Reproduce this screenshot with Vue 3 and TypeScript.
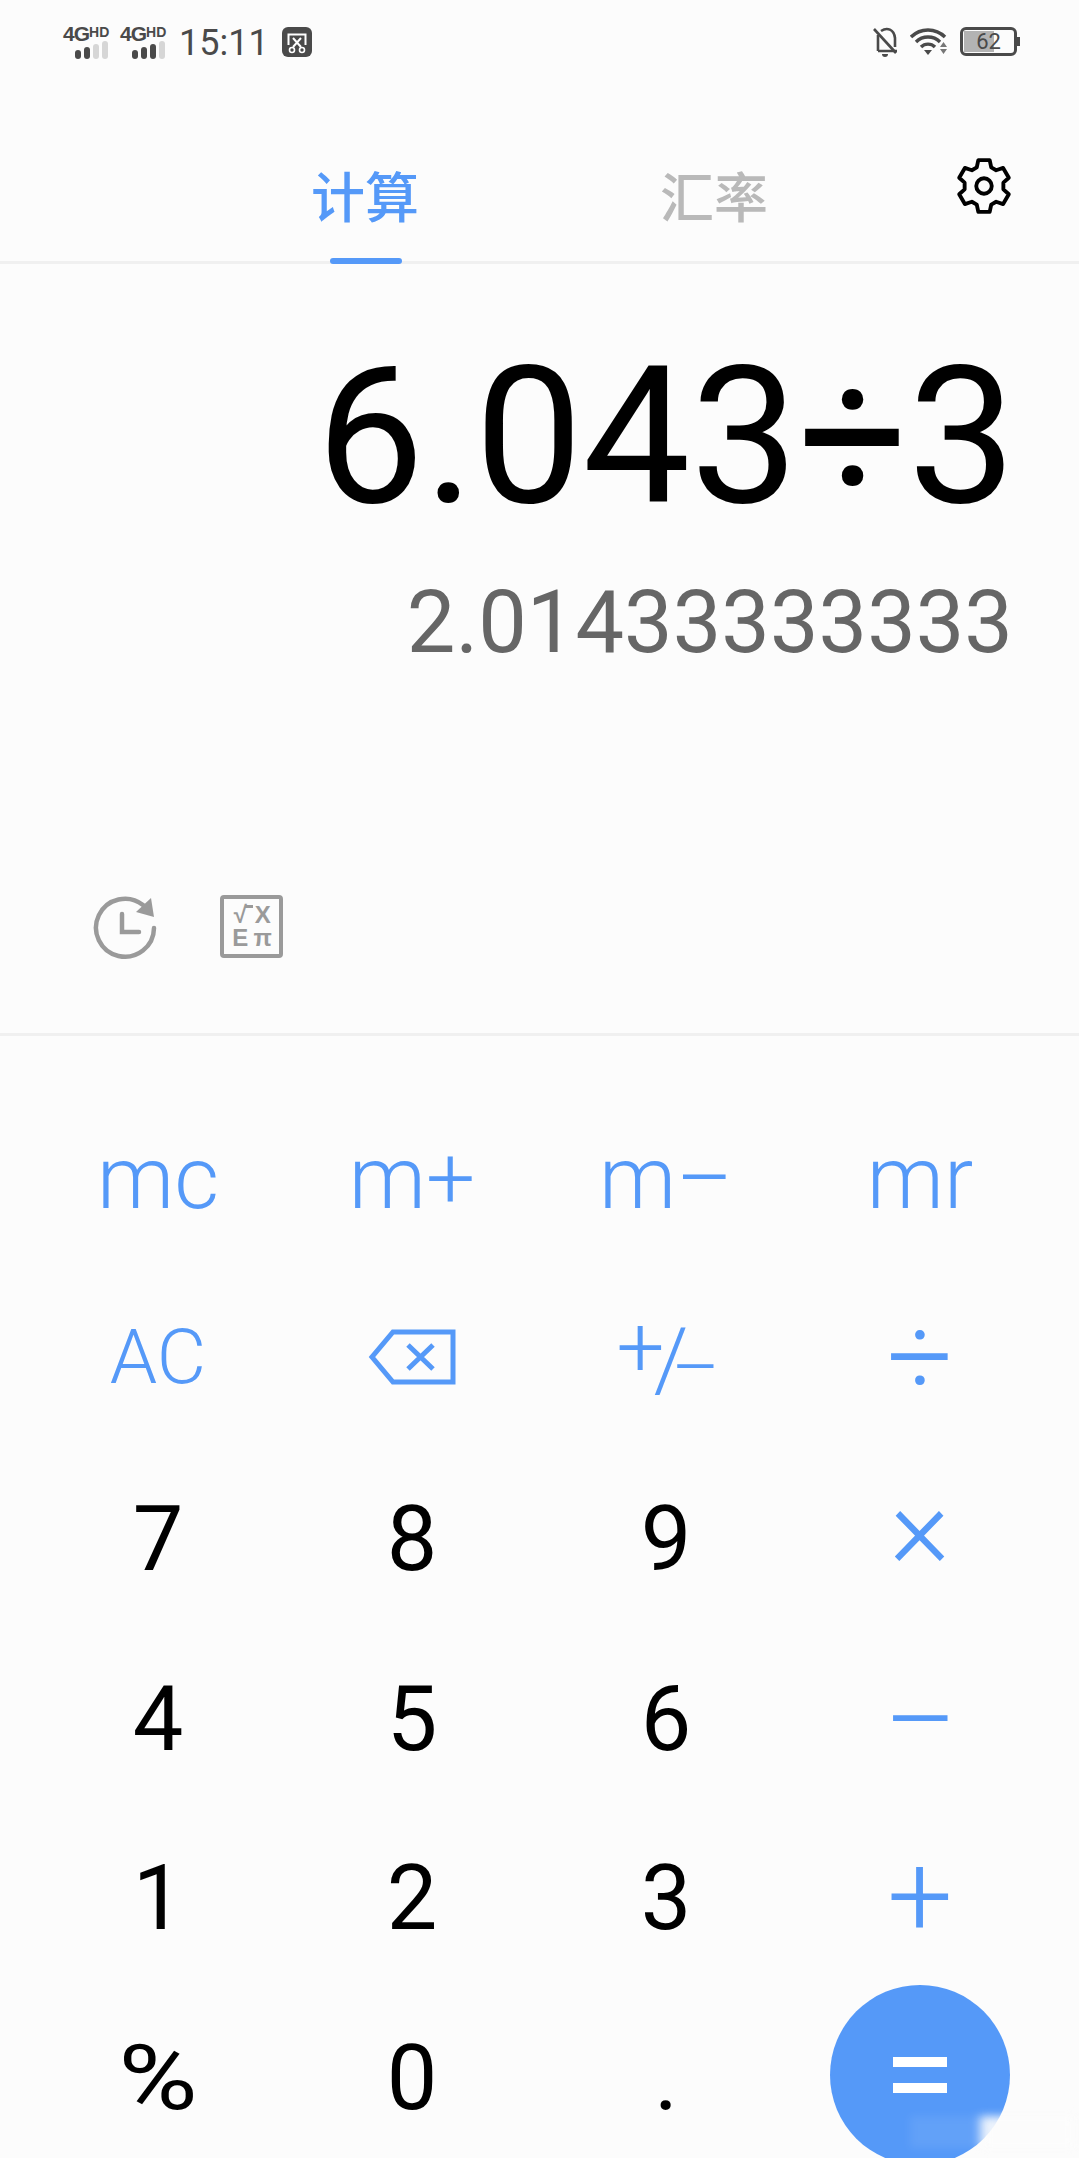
<template>
  <div class="phone">
    <!-- status bar -->
    <div class="status">
      <div class="status-left">
        <div v-for="(sig, i) in signals" :key="i" class="signal">
          <div class="net">4G<small>HD</small></div>
          <div class="bars">
            <i
              v-for="n in 4"
              :key="n"
              :class="{ on: n <= sig }"
              :style="{ height: 6 + n * 3 + 'px' }"
            ></i>
          </div>
        </div>
        <span class="time">15:11</span>
        <svg class="cut" width="30" height="30" viewBox="0 0 30 30">
          <rect width="30" height="30" rx="6" fill="#4a4a4a" />
          <path d="M6.500 18V7.500h17V18" fill="none" stroke="#fff" stroke-width="2" />
          <path d="M11 11l8 9M19 11l-8 9" stroke="#fff" stroke-width="2" fill="none" />
          <circle cx="10" cy="23" r="2.500" fill="#4a4a4a" stroke="#fff" stroke-width="1.600" />
          <circle cx="20" cy="23" r="2.500" fill="#4a4a4a" stroke="#fff" stroke-width="1.600" />
        </svg>
      </div>
      <div class="status-right">
        <svg width="26" height="30" viewBox="0 0 26 30" fill="none" stroke="#4a4a4a" stroke-width="2.600">
          <path d="M2 2l22 24" />
          <path d="M6 8v16M6 24h19M9 4c6-4 13-2 14 7v9" />
          <path d="M10 27a3 3 0 0 0 6 0z" fill="#4a4a4a" stroke="none" />
        </svg>
        <svg width="38" height="28" viewBox="0 0 38 28">
          <path d="M1 9a24 24 0 0 1 34 0" fill="none" stroke="#4a4a4a" stroke-width="3.400" />
          <path d="M6 14a17 17 0 0 1 24 0" fill="none" stroke="#4a4a4a" stroke-width="3.400" />
          <path d="M11 19a10 10 0 0 1 14 0" fill="none" stroke="#4a4a4a" stroke-width="3.400" />
          <path d="M14 22h8l-4 5z" fill="#4a4a4a" />
          <path d="M30 19h7l-3.500-5zM30 21h7l-3.500 5z" fill="#777" />
        </svg>
        <div class="battery">
          <div class="level" :style="{ width: battery + '%' }"></div>
          <span>{{ battery }}</span>
        </div>
      </div>
    </div>

    <!-- tabs -->
    <div class="tabs">
      <div class="tab active">计算<b></b></div>
      <div class="tab">汇率</div>
      <svg class="gear" width="62" height="62" viewBox="0 0 24 24" fill="none" stroke="#000" stroke-width="1.500" stroke-linejoin="round">
        <path d="M9.800 2h4.400l.6 2.800 1.900 1.100 2.700-.9 2.200 3.800-2.100 1.900v2.600l2.100 1.900-2.200 3.800-2.700-.9-1.900 1.100-.6 2.800H9.800l-.6-2.800-1.900-1.100-2.700.9-2.200-3.800 2.100-1.900v-2.600L2.400 8.800l2.200-3.800 2.700.9 1.900-1.100z" />
        <circle cx="12" cy="12" r="3" />
      </svg>
    </div>

    <!-- display -->
    <div class="display">
      <div class="expr">6.043÷3</div>
      <div class="result">2.01433333333</div>
      <div class="tools">
        <svg width="66" height="66" viewBox="0 0 66 66" fill="none" stroke="#9a9a9a" stroke-width="4.500" stroke-linecap="round">
          <path d="M62 33a29 29 0 1 1-11-23" />
          <path d="M30 19v18h17" />
          <path d="M44 17l15-14 3 19z" fill="#9a9a9a" stroke="none" />
        </svg>
        <div class="sci">
          <span class="root">√</span><span>X</span><span>E</span><span>π</span>
        </div>
      </div>
    </div>

    <!-- keypad -->
    <div class="keys">
      <button v-for="k in keys" :key="k.label" :class="['key', k.kind]">
        <svg v-if="k.label === 'del'" width="88" height="56" viewBox="0 0 88 56" fill="none" stroke="#5599f8" stroke-width="5">
          <path d="M85 3v50H25L4 28 25 3z" />
          <path d="M40 16l25 24M65 16L40 40" />
        </svg>
        <span v-else-if="k.label === '+/-'" class="sign"><s>+</s><em>/</em><u>–</u></span>
        <span v-else-if="k.label === '='" class="eq"><i></i><i></i></span>
        <span v-else class="glyph">{{ k.label }}</span>
      </button>
    </div>

    <!-- watermark smudge in the corner -->
    <div class="smudge"></div>
  </div>
</template>

<script setup lang="ts">
type Key = { label: string; kind: string }

const signals = [2, 3]
const battery = 62

const row = (labels: string[], kind: string): Key[] => labels.map((label) => ({ label, kind }))

const keys: Key[] = [
  ...row(['mc', 'm+', 'm–', 'mr'], 'mem'),
  ...row(['AC', 'del', '+/-'], 'fn'),
  { label: '÷', kind: 'op' },
  ...row(['7', '8', '9'], 'num'),
  { label: '×', kind: 'op times' },
  ...row(['4', '5', '6'], 'num'),
  { label: '−', kind: 'op minus' },
  ...row(['1', '2', '3'], 'num'),
  { label: '+', kind: 'op' },
  { label: '%', kind: 'num pct' },
  ...row(['0', '.'], 'num'),
  { label: '=', kind: 'equals' },
]
</script>

<style scoped>
.phone {
  position: relative;
  width: 1079px;
  height: 2158px;
  overflow: hidden;
  background: #fcfcfc;
  font-family: Roboto, "Noto Sans CJK SC", sans-serif;
}
.status {
  height: 84px;
  box-sizing: border-box;
  padding: 27px 59px 0 63px;
  display: flex;
  justify-content: space-between;
  align-items: flex-start;
  color: #4a4a4a;
}
.status-left,
.status-right {
  display: flex;
  align-items: flex-start;
}
.signal {
  width: 57px;
  margin-top: -3px;
}
.net {
  font: 700 21px/16px "Liberation Sans", sans-serif;
  letter-spacing: -1px;
}
.net small {
  font-size: 14px;
  vertical-align: 4px;
  letter-spacing: 0;
}
.bars {
  display: flex;
  align-items: flex-end;
  gap: 3px;
  margin: 0 0 0 12px;
  height: 17px;
}
.bars i {
  width: 6px;
  border-radius: 3px;
  background: #d6d6d6;
}
.bars i.on {
  background: #4a4a4a;
}
.time {
  font-size: 36px;
  line-height: 32px;
  margin-left: 2px;
}
.cut {
  margin-left: 13px;
}
.status-right {
  gap: 12px;
}
.status-right svg:nth-child(2) {
  margin-top: 1px;
}
.battery {
  position: relative;
  width: 57px;
  height: 29px;
  box-sizing: border-box;
  border: 3px solid #4a4a4a;
  border-radius: 6px;
  padding: 1px;
  margin-right: 3px;
  font-size: 22px;
  line-height: 23px;
}
.battery::after {
  content: "";
  position: absolute;
  right: -6px;
  top: 7px;
  width: 3px;
  height: 9px;
  background: #4a4a4a;
}
.level {
  height: 100%;
  background: #b3b3b3;
}
.battery span {
  position: absolute;
  left: 0;
  right: 0;
  top: 0;
  text-align: center;
}
.tabs {
  position: relative;
  height: 180px;
  box-sizing: border-box;
  border-bottom: 3px solid #f0f0f0;
  display: flex;
  padding: 84px 0 0 311px;
  gap: 241px;
}
.tab {
  position: relative;
  font-size: 54px;
  line-height: 64px;
  font-weight: 500;
  color: #b9b9b9;
}
.tab.active {
  color: #5599f8;
}
.tab b {
  position: absolute;
  left: 19px;
  bottom: -3px;
  width: 72px;
  height: 6px;
  border-radius: 3px;
  background: #5599f8;
}
.gear {
  position: absolute;
  left: 953px;
  top: 71px;
}
.display {
  height: 772px;
  box-sizing: border-box;
  border-bottom: 3px solid #f0f0f0;
  padding: 78px 66px 0 0;
  text-align: right;
}
.expr {
  font-size: 192px;
  line-height: 190px;
  margin-right: -3px;
  color: #000;
}
.result {
  font-size: 86.500px;
  line-height: 100px;
  margin-top: 41px;
  color: #666;
}
.tools {
  display: flex;
  align-items: flex-start;
  gap: 62px;
  margin: 222px 0 0 92px;
}
.sci {
  width: 63px;
  height: 63px;
  box-sizing: border-box;
  border: 4px solid #9a9a9a;
  border-radius: 4px;
  display: grid;
  grid-template-columns: 1fr 1fr;
  place-items: center;
  padding: 4px 5px;
  font: 700 24px/22px "Liberation Sans", sans-serif;
  color: #9a9a9a;
}
.root {
  position: relative;
}
.root::after {
  content: "";
  position: absolute;
  left: 11px;
  top: 1px;
  width: 8px;
  height: 3px;
  background: #9a9a9a;
}
.keys {
  display: grid;
  grid-template-columns: repeat(4, 254px);
  grid-auto-rows: 179.500px;
  padding: 52px 0 0 31px;
}
.key {
  border: 0;
  background: none;
  padding: 0;
  font-family: inherit;
  display: flex;
  align-items: center;
  justify-content: center;
}
.glyph {
  display: block;
}
.mem {
  font-size: 87px;
  font-weight: 350;
  color: #5599f8;
}
.fn {
  font-size: 76px;
  font-weight: 350;
  color: #5599f8;
}
.op {
  font-size: 116px;
  font-weight: 350;
  color: #5599f8;
}
.times .glyph {
  margin-top: -20px;
}
.minus .glyph {
  margin-top: 8px;
  transform: scaleX(1.15);
}
.num {
  font-size: 90px;
  font-weight: 450;
  color: #000;
  padding-top: 6px;
}
.pct .glyph {
  transform: scaleX(1.2);
}
.sign {
  position: relative;
  display: block;
  width: 97px;
  height: 67px;
  margin-left: 4px;
  font-weight: 350;
  line-height: 1;
}
.sign s,
.sign em,
.sign u {
  position: absolute;
  font-style: normal;
  text-decoration: none;
}
.sign s {
  left: -3px;
  top: -19px;
  font-size: 85px;
}
.sign em {
  left: 34px;
  top: -8px;
  font-size: 88px;
}
.sign u {
  left: 52px;
  top: 7px;
  font-size: 74px;
}
.equals {
  position: relative;
}
.eq {
  position: relative;
  z-index: 1;
  display: flex;
  flex-direction: column;
  gap: 16px;
}
.eq i {
  display: block;
  width: 54px;
  height: 10px;
  background: #fff;
}
.equals::before {
  content: "";
  position: absolute;
  left: 37px;
  top: -1px;
  width: 180px;
  height: 180px;
  border-radius: 50%;
  background: #5599f8;
}
.smudge {
  position: absolute;
  left: 910px;
  top: 2116px;
  width: 165px;
  height: 32px;
  background: linear-gradient(90deg, rgba(255, 255, 255, 0.08), rgba(255, 255, 255, 0.08) 40%, rgba(252, 252, 252, 0.9) 45%);
  filter: blur(4px);
}
</style>
